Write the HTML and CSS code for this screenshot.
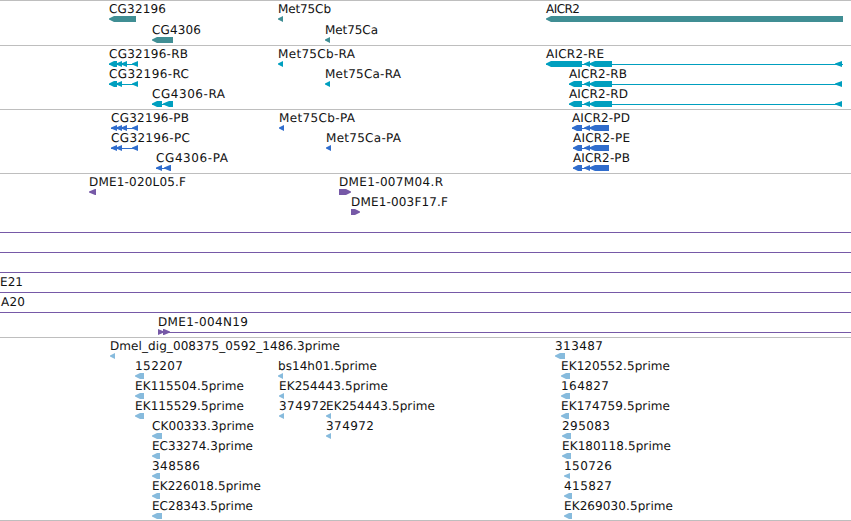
FILE: index.html
```
<!DOCTYPE html>
<html lang="en">
<head>
    <meta charset="UTF-8">
    <title>Genome tracks</title>
    <link rel="stylesheet" href="styles.css">
</head>
<body>
<div class="tracks">
    <section class="track genes">
        <svg class="row">
            <text x="109" y="12" textLength="57">CG32196</text>
            <path d="M109 17.5l5-2.5h22v6h-22l-5-2.5z"/>
            <text x="278" y="12" textLength="53">Met75Cb</text>
            <path d="M278 17.5l5-2.5v6l-5-2.5z"/>
            <text x="546" y="12" textLength="34">AICR2</text>
            <path d="M546 17.5l5-2.5h292v6h-292l-5-2.5z"/>
        </svg>
        <svg class="row">
            <text x="152" y="12" textLength="49">CG4306</text>
            <path d="M152 17.5l5-2.5h16v6h-16l-5-2.5z"/>
            <text x="325" y="12" textLength="53">Met75Ca</text>
            <path d="M325 17.5l5-2.5v6l-5-2.5z"/>
        </svg>
    </section>
    <section class="track transcripts">
        <svg class="row">
            <text x="109" y="12" textLength="79">CG32196-RB</text>
            <path d="M109 17.5l5-2.5h3v6h-3l-5-2.5zM116 17.5l6-2.5v6l-6-2.5zM121 17.5l6-2.5v6l-6-2.5zM132 17.5l6-2.5v6l-6-2.5zM109 18h28v1h-28z"/>
            <text x="278" y="12" textLength="77">Met75Cb-RA</text>
            <path d="M278 17.5l5-2.5v6l-5-2.5z"/>
            <text x="546" y="12" textLength="58">AICR2-RE</text>
            <path d="M546 17.5l5-2.5h31v6h-31l-5-2.5zM584 17.5l6-2.5v6l-6-2.5zM589 17.5l6-2.5h17v6h-17l-6-2.5zM835 17.5l7-2.5v6l-7-2.5zM546 18h297v1h-297z"/>
        </svg>
        <svg class="row">
            <text x="109" y="12" textLength="80">CG32196-RC</text>
            <path d="M109 17.5l5-2.5h3v6h-3l-5-2.5zM116 17.5l6-2.5v6l-6-2.5zM132 17.5l6-2.5v6l-6-2.5zM109 18h28v1h-28z"/>
            <text x="325" y="12" textLength="76">Met75Ca-RA</text>
            <path d="M325 17.5l5-2.5v6l-5-2.5z"/>
            <text x="569" y="12" textLength="58">AICR2-RB</text>
            <path d="M569 17.5l5-2.5h8v6h-8l-5-2.5zM584 17.5l6-2.5v6l-6-2.5zM589 17.5l6-2.5h17v6h-17l-6-2.5zM835 17.5l7-2.5v6l-7-2.5zM569 18h273v1h-273z"/>
        </svg>
        <svg class="row">
            <text x="152" y="12" textLength="73">CG4306-RA</text>
            <path d="M152 17.5l5-2.5h5v6h-5l-5-2.5zM163 17.5l6-2.5h4v6h-4l-6-2.5zM152 18h20v1h-20z"/>
            <text x="569" y="12" textLength="59">AICR2-RD</text>
            <path d="M569 17.5l5-2.5h8v6h-8l-5-2.5zM584 17.5l6-2.5v6l-6-2.5zM589 17.5l6-2.5h17v6h-17l-6-2.5zM835 17.5l7-2.5v6l-7-2.5zM569 18h273v1h-273z"/>
        </svg>
    </section>
    <section class="track proteins">
        <svg class="row">
            <text x="111" y="12" textLength="78">CG32196-PB</text>
            <path d="M111 17.5l6-2.5v6l-6-2.5zM116 17.5l6-2.5v6l-6-2.5zM121 17.5l6-2.5v6l-6-2.5zM132 17.5l6-2.5v6l-6-2.5zM111 18h26v1h-26z"/>
            <text x="279" y="12" textLength="76">Met75Cb-PA</text>
            <path d="M279 17.5l5-2.5v6l-5-2.5z"/>
            <text x="572" y="12" textLength="58">AICR2-PD</text>
            <path d="M572 17.5l5-2.5h5v6h-5l-5-2.5zM584 17.5l6-2.5v6l-6-2.5zM589 17.5l6-2.5h14v6h-14l-6-2.5zM572 18h36v1h-36z"/>
        </svg>
        <svg class="row">
            <text x="111" y="12" textLength="79">CG32196-PC</text>
            <path d="M111 17.5l6-2.5v6l-6-2.5zM116 17.5l6-2.5v6l-6-2.5zM132 17.5l6-2.5v6l-6-2.5zM111 18h26v1h-26z"/>
            <text x="326" y="12" textLength="75">Met75Ca-PA</text>
            <path d="M326 17.5l5-2.5v6l-5-2.5z"/>
            <text x="573" y="12" textLength="57">AICR2-PE</text>
            <path d="M573 17.5l5-2.5h4v6h-4l-5-2.5zM584 17.5l6-2.5v6l-6-2.5zM589 17.5l6-2.5h14v6h-14l-6-2.5zM573 18h35v1h-35z"/>
        </svg>
        <svg class="row">
            <text x="156" y="12" textLength="72">CG4306-PA</text>
            <path d="M156 17.5l6-2.5v6l-6-2.5zM164 17.5l6-2.5h1v6h-1l-6-2.5zM156 18h14v1h-14z"/>
            <text x="573" y="12" textLength="57">AICR2-PB</text>
            <path d="M573 17.5l5-2.5h4v6h-4l-5-2.5zM584 17.5l6-2.5v6l-6-2.5zM589 17.5l6-2.5h14v6h-14l-6-2.5zM573 18h35v1h-35z"/>
        </svg>
    </section>
    <section class="track bacs">
        <svg class="row">
            <text x="89" y="12" textLength="97">DME1-020L05.F</text>
            <path d="M89 17.5l6-2.5h1v6h-1l-6-2.5z"/>
            <text x="339" y="12" textLength="104">DME1-007M04.R</text>
            <path d="M339 15h7l5 2.5v1l-5 2.5h-7z"/>
        </svg>
        <svg class="row">
            <text x="351" y="12" textLength="97">DME1-003F17.F</text>
            <path d="M351 15h4l5 2.5v1l-5 2.5h-4z"/>
        </svg>
        <svg class="row">
            <path d="M0 18h851v1h-851z"/>
        </svg>
        <svg class="row">
            <path d="M0 18h851v1h-851z"/>
        </svg>
        <svg class="row">
            <path d="M0 18h851v1h-851z"/>
        </svg>
        <svg class="row">
            <text x="0" y="12" textLength="23">E21</text>
            <path d="M0 18h851v1h-851z"/>
        </svg>
        <svg class="row">
            <text x="1" y="12" textLength="24">A20</text>
            <path d="M0 18h851v1h-851z"/>
        </svg>
        <svg class="row">
            <text x="158" y="12" textLength="90">DME1-004N19</text>
            <path d="M158 15l6 2.5v1l-6 2.5zM163 15h1l6 2.5v1l-6 2.5h-1zM158 18h693v1h-693z"/>
        </svg>
    </section>
    <section class="track ests">
        <svg class="row">
            <text x="110" y="12" textLength="230">Dmel_dig_008375_0592_1486.3prime</text>
            <path d="M110 17.5l5-2.5v6l-5-2.5z"/>
            <text x="555" y="12" textLength="48">313487</text>
            <path d="M555 17.5l5-2.5h5v6h-5l-5-2.5z"/>
        </svg>
        <svg class="row">
            <text x="135" y="12" textLength="48">152207</text>
            <path d="M135 17.5l5-2.5h4v6h-4l-5-2.5z"/>
            <text x="278" y="12" textLength="99">bs14h01.5prime</text>
            <path d="M278 17.5l5-2.5v6l-5-2.5z"/>
            <text x="561" y="12" textLength="109">EK120552.5prime</text>
            <path d="M561 17.5l5-2.5h4v6h-4l-5-2.5z"/>
        </svg>
        <svg class="row">
            <text x="135" y="12" textLength="109">EK115504.5prime</text>
            <path d="M135 17.5l5-2.5h4v6h-4l-5-2.5z"/>
            <text x="279" y="12" textLength="109">EK254443.5prime</text>
            <path d="M279 17.5l5-2.5v6l-5-2.5z"/>
            <text x="561" y="12" textLength="48">164827</text>
            <path d="M561 17.5l5-2.5h4v6h-4l-5-2.5z"/>
        </svg>
        <svg class="row">
            <text x="135" y="12" textLength="109">EK115529.5prime</text>
            <path d="M135 17.5l5-2.5h4v6h-4l-5-2.5z"/>
            <text x="279" y="12" textLength="48">374972</text>
            <path d="M279 17.5l5-2.5v6l-5-2.5z"/>
            <text x="326" y="12" textLength="109">EK254443.5prime</text>
            <path d="M326 17.5l5-2.5v6l-5-2.5z"/>
            <text x="561" y="12" textLength="109">EK174759.5prime</text>
            <path d="M561 17.5l5-2.5h3v6h-3l-5-2.5z"/>
        </svg>
        <svg class="row">
            <text x="152" y="12" textLength="102">CK00333.3prime</text>
            <path d="M152 17.5l5-2.5h5v6h-5l-5-2.5z"/>
            <text x="326" y="12" textLength="48">374972</text>
            <path d="M326 17.5l5-2.5v6l-5-2.5z"/>
            <text x="562" y="12" textLength="48">295083</text>
            <path d="M562 17.5l5-2.5h4v6h-4l-5-2.5z"/>
        </svg>
        <svg class="row">
            <text x="152" y="12" textLength="101">EC33274.3prime</text>
            <path d="M152 17.5l5-2.5h3v6h-3l-5-2.5z"/>
            <text x="562" y="12" textLength="109">EK180118.5prime</text>
            <path d="M562 17.5l5-2.5h4v6h-4l-5-2.5z"/>
        </svg>
        <svg class="row">
            <text x="152" y="12" textLength="48">348586</text>
            <path d="M152 17.5l5-2.5h3v6h-3l-5-2.5z"/>
            <text x="564" y="12" textLength="48">150726</text>
            <path d="M564 17.5l6-2.5v6l-6-2.5z"/>
        </svg>
        <svg class="row">
            <text x="152" y="12" textLength="109">EK226018.5prime</text>
            <path d="M152 17.5l5-2.5h3v6h-3l-5-2.5z"/>
            <text x="564" y="12" textLength="48">415827</text>
            <path d="M564 17.5l5-2.5h3v6h-3l-5-2.5z"/>
        </svg>
        <svg class="row">
            <text x="152" y="12" textLength="101">EC28343.5prime</text>
            <path d="M152 17.5l5-2.5h5v6h-5l-5-2.5z"/>
            <text x="564" y="12" textLength="109">EK269030.5prime</text>
            <path d="M564 17.5l5-2.5h3v6h-3l-5-2.5z"/>
        </svg>
    </section>
</div>
</body>
</html>
```
FILE: styles.css
```
body {
    margin: 0;
    background-color: white;
    overflow: hidden;
}

.tracks {
    width: 851px;
    border-bottom: 1px solid #bebebe;
}

.track {
    display: flex;
    flex-direction: column;
    border-top: 1px solid #bebebe;
    padding-bottom: 3px;
}

.row {
    display: block;
    width: 100%;
    height: 20px;
    overflow: visible;
}

.row text {
    font-family: "DejaVu Sans", sans-serif;
    font-size: 12px;
    fill: #111;
    text-rendering: geometricPrecision;
}

.genes {
    fill: #408e94;
    padding-bottom: 2px;
}

.genes .row {
    height: 21px;
}

.transcripts {
    fill: #009fbf;
}

.proteins {
    fill: #306dcd;
}

.bacs {
    fill: #7659a7;
}

.ests {
    fill: #87bbdd;
    padding-bottom: 2px;
}
```
